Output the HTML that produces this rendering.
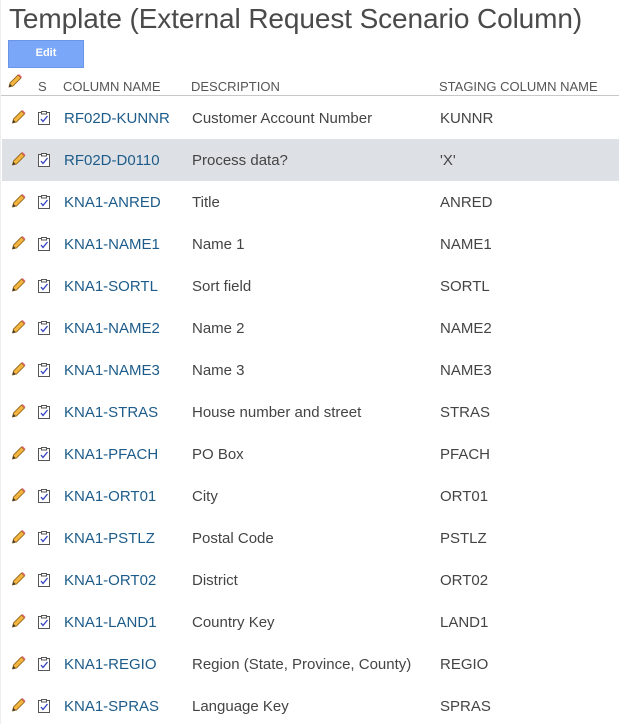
<!DOCTYPE html>
<html><head><meta charset="utf-8"><style>
*{margin:0;padding:0;box-sizing:border-box}
body{width:619px;height:724px;overflow:hidden;background:#fff;font-family:"Liberation Sans",sans-serif;position:relative;border-left:1px solid #eceef0}
.title{position:absolute;left:8px;top:3px;font-size:28px;color:#4a4a4a;font-weight:300;letter-spacing:-0.1px;white-space:nowrap}
.btn{position:absolute;left:7px;top:40px;width:76px;height:28px;background:#7ba7f9;border:1px solid #6b96e8;color:#fff;font-size:11px;font-weight:bold;text-align:center;line-height:25px}
.hdr{position:absolute;top:79px;font-size:13px;color:#555;white-space:nowrap}
.hline{position:absolute;left:0;top:95px;width:619px;height:1px;background:#c8c8c8}
.row{position:absolute;left:1px;width:618px;height:42px}
.row.sel{background:#dde1e5}
.row span{position:absolute;top:13px;font-size:15px;white-space:nowrap}
.c1{left:62px;color:#1d5c8a}
.c2{left:190px;color:#444}
.c3{left:438px;color:#444}
.pen{position:absolute;left:8px;top:12px}
.clip{position:absolute;left:36px;top:14px}
</style></head><body>
<div class="title">Template (External Request Scenario Column)</div>
<div class="btn">Edit</div>
<svg style="position:absolute;left:6px;top:73px" width="16" height="16" viewBox="0 0 16 16"><path d="M2 14 L3 10 L11 2 L14 5 L6 13 Z" fill="#f2b540" stroke="#8a5a10" stroke-width="0.8"/><path d="M11 2 L14 5 L15 4 L12 1Z" fill="#e0606a"/><path d="M2 14 L3 11 L5 13Z" fill="#333"/></svg>
<div class="hdr" style="left:37px">S</div>
<div class="hdr" style="left:62px">COLUMN NAME</div>
<div class="hdr" style="left:190px">DESCRIPTION</div>
<div class="hdr" style="left:438px">STAGING COLUMN NAME</div>
<div class="hline"></div>
<div id="rows"></div>
<script>
var d=[["RF02D-KUNNR","Customer Account Number","KUNNR"],["RF02D-D0110","Process data?","'X'"],["KNA1-ANRED","Title","ANRED"],["KNA1-NAME1","Name 1","NAME1"],["KNA1-SORTL","Sort field","SORTL"],["KNA1-NAME2","Name 2","NAME2"],["KNA1-NAME3","Name 3","NAME3"],["KNA1-STRAS","House number and street","STRAS"],["KNA1-PFACH","PO Box","PFACH"],["KNA1-ORT01","City","ORT01"],["KNA1-PSTLZ","Postal Code","PSTLZ"],["KNA1-ORT02","District","ORT02"],["KNA1-LAND1","Country Key","LAND1"],["KNA1-REGIO","Region (State, Province, County)","REGIO"],["KNA1-SPRAS","Language Key","SPRAS"]];
var pen='<svg class="pen" width="17" height="16" viewBox="0 0 16 16"><path d="M2 14 L3 10 L11 2 L14 5 L6 13 Z" fill="#f2b540" stroke="#8a5a10" stroke-width="0.8"/><path d="M11 2 L14 5 L15 4 L12 1Z" fill="#e0606a"/><path d="M2 14 L3 11 L5 13Z" fill="#333"/></svg>';
var clip='<svg class="clip" width="13" height="14" viewBox="0 0 13 14"><rect x="0.5" y="1.5" width="11" height="12" fill="#fff" stroke="#555"/><rect x="3.5" y="0.5" width="5" height="2.5" fill="#fff" stroke="#555"/><path d="M3 8 L5 10.5 L9.5 5" fill="none" stroke="#3040c0" stroke-width="1.3"/></svg>';
var h='';d.forEach(function(r,i){h+='<div class="row'+(i==1?' sel':'')+'" style="top:'+(97+i*42)+'px">'+pen+clip+'<span class="c1">'+r[0]+'</span><span class="c2">'+r[1]+'</span><span class="c3">'+r[2]+'</span></div>';});
document.getElementById('rows').innerHTML=h;
</script>
</body></html>
